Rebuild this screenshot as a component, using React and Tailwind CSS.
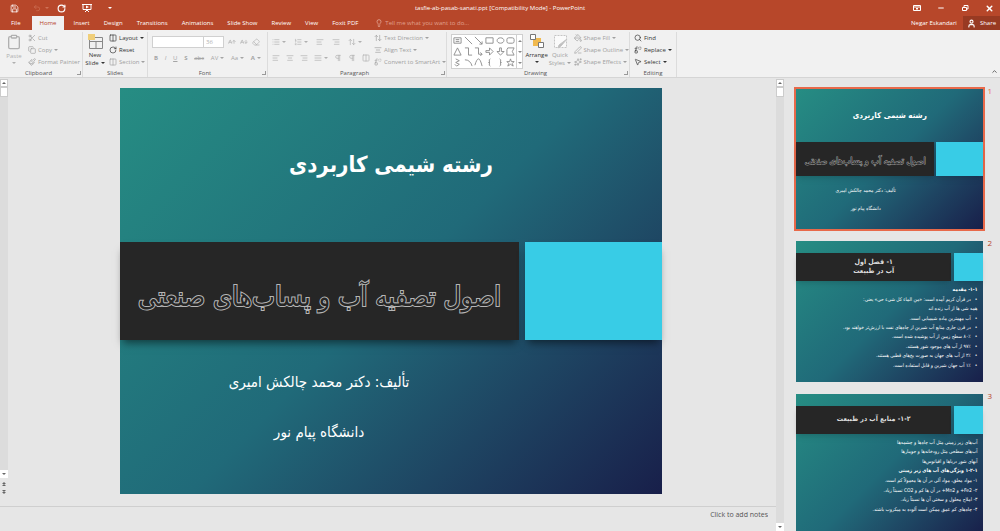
import React from "react";
import {
  AArrowDown,
  AArrowUp,
  AlignCenter,
  AlignJustify,
  AlignLeft,
  AlignRight,
  ArrowUpDown,
  ChevronUp,
  Clipboard,
  Columns2,
  Copy,
  Eraser,
  Lightbulb,
  List,
  ListOrdered,
  Minus,
  MousePointer2,
  PaintBucket,
  Paintbrush,
  PenLine,
  Pilcrow,
  Replace,
  RotateCw,
  Save,
  Scissors,
  Search,
  Sparkles,
  Undo2,
  User,
  X,
} from "lucide-react";

const TABS = ["File", "Home", "Insert", "Design", "Transitions", "Animations", "Slide Show", "Review", "View", "Foxit PDF"];

const SHAPES = [
  "M1 2h8v6H1zM3 4h4M3 6h4",
  "M1 1l8 8",
  "M1 1l8 8M9 6v3H6",
  "M1 2h8v6H1z",
  "M5 2c5 0 5 6 0 6s-5-6 0-6z",
  "M3 2h4q2 0 2 2v2q0 2-2 2H3q-2 0-2-2V4q0-2 2-2z",
  "M5 1l4 8H1z",
  "M1 1h4v8h4",
  "M1 1h4v7h4M7 6l2 2-2 2",
  "M1 4h4V1l4 4-4 4V6H1z",
  "M4 1h2v4h3L5 9 1 5h3z",
  "M2 1h7L7 5l2 4H1V3z",
  "M3 1l4 2-4 2 4 2-3 2M2 7l2 2",
  "M1 2q6 0 8 7",
  "M1 8q2-7 4-7t4 8",
  "M6 1q-2 0-1 4q-2 0 0 0q-1 4 1 4",
  "M4 1q2 0 1 4q2 0 0 0q1 4-1 4",
  "M5 1l1 3h3L7 6l1 3-3-2-3 2 1-3-2-2h3z",
];

const CHAPTER_ONE = [
  { text: "۱-۱- مقدمه", bold: true },
  { text: "در قرآن کریم آمده است: «من الماء کل شیء حی» یعنی:", bullet: true },
  { text: "همه شی ها از آب زنده اند" },
  { text: "آب مهمترین ماده شیمیایی است.", bullet: true },
  { text: "در قرن جاری منابع آب شیرین از چاه‌های نفت با ارزش‌تر خواهند بود.", bullet: true },
  { text: "۸۰٪ سطح زمین از آب پوشیده شده است.", bullet: true },
  { text: "۹۷٪ از آب های موجود شور هستند.", bullet: true },
  { text: "۲٪ از آب های جهان به صورت یخ‌های قطبی هستند.", bullet: true },
  { text: "۱٪ آب جهان شیرین و قابل استفاده است.", bullet: true },
];

const WATER_SOURCES = [
  { text: "آب‌های زیر زمینی مثل آب چاه‌ها و چشمه‌ها" },
  { text: "آب‌های سطحی مثل رودخانه‌ها و جویبارها" },
  { text: "آبهای شور دریاها و اقیانوس‌ها" },
  { text: "۱-۲-۱ ویژگی‌های آب های زیر زمینی", bold: true },
  { text: "۱- مواد معلق، مواد آلی در آن ها معمولاً کم است." },
  { text: "۲- Fe2+ و Mn2+ در آن ها کم و CO2 نسبتاً زیاد." },
  { text: "۳- املاح محلول و سختی آن ها نسبتاً زیاد." },
  { text: "۴- چاه‌های کم عمق ممکن است آلوده به میکروب باشند." },
];

const slideBase =
  "grid bg-linear-135 from-[#268d83] via-[#206a79] via-50% to-[#181f4a] font-['DejaVu_Sans_Condensed','DejaVu_Sans',sans-serif] text-white";

function Caret() {
  return <span className="inline-block h-0 w-0 border-x-2 border-t-2 border-x-transparent border-t-current align-middle" />;
}

function CaretUp() {
  return <span className="inline-block h-0 w-0 border-x-2 border-b-2 border-x-transparent border-b-current align-middle" />;
}

function Tool({ icon: Icon, label, caret, dim }) {
  return (
    <button className={`flex h-3 items-center gap-0.5 whitespace-nowrap ${dim ? "text-[#a0a0a0]" : "text-[#333]"}`}>
      <Icon size={8} strokeWidth={2} />
      {label}
      {caret && <Caret />}
    </button>
  );
}

function IconTool({ icon: Icon, label, caret }) {
  return (
    <button aria-label={label} className="flex items-center gap-0.5 text-[#b0b0b0]">
      <Icon size={8} strokeWidth={2} />
      {caret && <Caret />}
    </button>
  );
}

function Group({ label, className, launcher = true, children }) {
  return (
    <section className={`flex shrink-0 flex-col border-r border-[#dcdcdc] ${className}`}>
      <div className="flex h-[37px] items-start">{children}</div>
      <div className="flex items-center text-[#555]">
        <span className="flex-1 text-center">{label}</span>
        {launcher && (
          <button aria-label={`${label} options`} className="mr-px size-1 border-r border-b border-[#999]" />
        )}
      </div>
    </section>
  );
}

function TitleBar() {
  return (
    <div className="flex h-4 items-center text-white">
      <div className="flex w-1/4 items-center pl-2.5">
        <button aria-label="Save" className="mr-3.5"><Save size={9} /></button>
        <button aria-label="Undo" className="mr-2 flex items-center gap-1 text-[#cf7257]"><Undo2 size={8} /><Caret /></button>
        <button aria-label="Repeat" className="mr-4"><RotateCw size={9} strokeWidth={3} /></button>
        <button aria-label="Start from beginning" className="mr-4">
          <svg width="10" height="10" viewBox="0 0 10 10" fill="none" stroke="currentColor">
            <path d="M0 1.5h10M1 1.5v5h8v-5M5 6.5v1M3 9l2-2 2 2" />
            <path d="M4 2.5l3 1.5-3 1.5z" fill="currentColor" stroke="none" />
          </svg>
        </button>
        <button aria-label="Customize toolbar" className="flex items-center"><Caret /></button>
      </div>
      <h1 className="flex-1 text-center">tasfie-ab-pasab-sanati.ppt [Compatibility Mode] - PowerPoint</h1>
      <div className="flex w-1/4 items-center justify-end gap-4 pr-1.5">
        <button aria-label="Ribbon display options">
          <svg width="8" height="8" viewBox="0 0 8 8" fill="none" stroke="currentColor">
            <path d="M.5 1.5h7v5h-7zM.5 3h7M4 6V4M3 5l1-1 1 1" />
          </svg>
        </button>
        <button aria-label="Minimize"><Minus size={8} strokeWidth={3} /></button>
        <button aria-label="Restore">
          <svg width="8" height="8" viewBox="0 0 8 8" fill="none" stroke="currentColor">
            <path d="M1.5 3.5h4v3h-4zM3 3V1.5h4V5H6" />
          </svg>
        </button>
        <button aria-label="Close"><X size={9} strokeWidth={4} /></button>
      </div>
    </div>
  );
}

function TabBar() {
  return (
    <div className="flex h-3.5 items-stretch text-white">
      <nav className="flex items-stretch pl-1">
        {TABS.map((tab) => (
          <button
            key={tab}
            className={tab === "Home" ? "mr-0.5 ml-1 bg-[#f1f1f1] px-2 text-[#b7472a]" : "px-[7px]"}
          >
            {tab}
          </button>
        ))}
      </nav>
      <label className="ml-2.5 flex flex-1 items-center gap-0.5 text-[#eebcad]">
        <Lightbulb size={8} />
        <input
          aria-label="Tell me what you want to do"
          placeholder="Tell me what you want to do..."
          className="w-32 bg-transparent placeholder:text-[#e0a08e]"
        />
      </label>
      <span className="flex items-center pr-1.5">Negar Eskandari</span>
      <button className="flex items-center gap-1 bg-[#983a22] px-1">
        <User size={9} strokeWidth={3} />
        Share
      </button>
    </div>
  );
}

function Ribbon() {
  return (
    <div className="flex h-12 items-stretch border-b border-[#d5d5d5] bg-[#f1f1f1] pt-0.5 text-[#555]">
      <Group label="Clipboard" className="w-[83px]">
        <button className="flex w-7 flex-col items-center gap-0.5 pt-0.5 text-[#b0b0b0]">
          <Clipboard size={16} strokeWidth={2} />
          Paste
          <Caret />
        </button>
        <div>
          <Tool icon={Scissors} label="Cut" dim />
          <Tool icon={Copy} label="Copy" caret dim />
          <Tool icon={Paintbrush} label="Format Painter" dim />
        </div>
      </Group>

      <Group label="Slides" className="w-[65px]" launcher={false}>
        <button className="flex w-6 flex-col items-center pt-0.5 leading-2 text-[#333]">
          <svg className="mb-0.5" width="15" height="15" viewBox="0 0 15 15" fill="none" stroke="#888">
            <path d="M1.5 3.5h13v11h-13zM1.5 7.5h13M8 7.5v7" />
            <path d="M0 0h7v6H0z" fill="#f0cf7a" stroke="none" />
          </svg>
          New
          <span className="flex items-center gap-0.5">Slide <Caret /></span>
        </button>
        <div className="pl-0.5">
          <Tool icon={Columns2} label="Layout" caret />
          <Tool icon={RotateCw} label="Reset" />
          <Tool icon={Columns2} label="Section" caret dim />
        </div>
      </Group>

      <Group label="Font" className="w-[120px]">
        <div className="flex flex-1 flex-col gap-1.5 px-1 pt-1">
          <div className="flex items-center gap-1">
            <div className="flex">
              <select aria-label="Font name" className="h-3 w-[52px] appearance-none border border-[#d0d0d0] bg-white" />
              <select aria-label="Font size" className="h-3 w-5 appearance-none border border-l-0 border-[#d0d0d0] bg-white px-0.5 text-[#b0b0b0]">
                <option>36</option>
              </select>
            </div>
            <IconTool icon={AArrowUp} label="Increase font size" />
            <IconTool icon={AArrowDown} label="Decrease font size" />
            <IconTool icon={Eraser} label="Clear formatting" />
          </div>
          <div className="flex items-center justify-between px-0.5 text-[#a5a5a5]">
            <button className="font-bold">B</button>
            <button className="italic">I</button>
            <button className="underline">U</button>
            <button className="font-bold">S</button>
            <button className="line-through">abc</button>
            <button className="flex items-center gap-0.5">AV <Caret /></button>
            <button className="flex items-center gap-0.5">Aa <Caret /></button>
            <button className="flex items-center gap-0.5 font-bold">A <Caret /></button>
          </div>
        </div>
      </Group>

      <Group label="Paragraph" className="w-[179px]">
        <div className="flex flex-1 flex-col gap-2 px-1 pt-1.5">
          <div className="flex items-center gap-2">
            <IconTool icon={List} label="Bullets" caret />
            <IconTool icon={ListOrdered} label="Numbering" caret />
            <IconTool icon={AlignLeft} label="Decrease indent" />
            <IconTool icon={AlignRight} label="Increase indent" />
            <IconTool icon={ArrowUpDown} label="Line spacing" caret />
          </div>
          <div className="flex items-center gap-1.5">
            <IconTool icon={AlignLeft} label="Align left" />
            <IconTool icon={AlignCenter} label="Center" />
            <IconTool icon={AlignRight} label="Align right" />
            <IconTool icon={AlignJustify} label="Justify" caret />
            <IconTool icon={Pilcrow} label="Left to right" />
            <IconTool icon={Pilcrow} label="Right to left" />
            <IconTool icon={Columns2} label="Columns" />
          </div>
        </div>
        <div className="w-[78px]">
          <Tool icon={ArrowUpDown} label="Text Direction" caret dim />
          <Tool icon={AlignCenter} label="Align Text" caret dim />
          <Tool icon={Replace} label="Convert to SmartArt" caret dim />
        </div>
      </Group>

      <Group label="Drawing" className="w-[183px]">
        <div className="mt-0.5 ml-1 flex border border-[#cfcfcf] bg-white">
          <div className="grid grid-cols-6 gap-0.5 p-px">
            {SHAPES.map((d, i) => (
              <button key={i} aria-label={`Shape ${i + 1}`}>
                <svg width="9" height="9" viewBox="0 0 10 10" fill="none" stroke="#8a8a8a">
                  <path d={d} />
                </svg>
              </button>
            ))}
          </div>
          <div className="flex w-1.5 flex-col items-center justify-around border-l border-[#cfcfcf] text-[#888]">
            <CaretUp />
            <Caret />
            <Caret />
          </div>
        </div>
        <button className="ml-0.5 flex w-6 flex-col items-center gap-0.5 pt-0.5 text-[#333]">
          <svg width="16" height="15" viewBox="0 0 16 15">
            <path d="M4 4h8v8H4z" fill="#f0b94f" />
            <path d="M1.5 .5h5v5h-5zM9.5 8.5h5v5h-5z" fill="#fff" stroke="#777" />
          </svg>
          Arrange
          <Caret />
        </button>
        <button className="flex w-6 flex-col items-center pt-0.5 leading-2 text-[#a0a0a0]">
          <svg className="mb-px" width="16" height="16" viewBox="0 0 16 16" fill="none" stroke="#c4c4c4">
            <path d="M2.5 1.5h12v12h-12z" fill="#fafafa" strokeDasharray="2 1" />
            <path d="M15 5l-6 7-3 2 1-3z" fill="#bdbdbd" />
          </svg>
          Quick
          <span className="flex items-center gap-0.5">Styles <Caret /></span>
        </button>
        <div className="ml-0.5">
          <Tool icon={PaintBucket} label="Shape Fill" caret dim />
          <Tool icon={PenLine} label="Shape Outline" caret dim />
          <Tool icon={Sparkles} label="Shape Effects" caret dim />
        </div>
      </Group>

      <Group label="Editing" className="w-[47px]" launcher={false}>
        <div className="pl-1">
          <Tool icon={Search} label="Find" />
          <Tool icon={Replace} label="Replace" caret />
          <Tool icon={MousePointer2} label="Select" caret />
        </div>
      </Group>

      <div className="flex flex-1 items-end justify-end p-0.5">
        <button aria-label="Collapse the ribbon"><ChevronUp size={7} strokeWidth={3} /></button>
      </div>
    </div>
  );
}

function ScrollBar({ paging }) {
  return (
    <div className="flex w-2 shrink-0 flex-col items-center bg-[#dcdcdc] text-[#666]">
      <button aria-label="Scroll up" className="flex h-2 w-full items-center justify-center border border-[#ccc] bg-white">
        <CaretUp />
      </button>
      <div className="h-2.5 w-full border border-[#ccc] bg-white" />
      <div className="flex-1" />
      <button aria-label="Scroll down" className="flex h-2 w-full items-center justify-center bg-white">
        <Caret />
      </button>
      {paging && (
        <div className="flex w-full flex-col items-center gap-1 bg-[#e6e6e6] py-1">
          <button aria-label="Previous slide" className="flex flex-col items-center"><CaretUp /><CaretUp /></button>
          <button aria-label="Next slide" className="flex flex-col items-center"><Caret /><Caret /></button>
        </div>
      )}
    </div>
  );
}

function MainSlide() {
  return (
    <article dir="rtl" className={`aspect-[542/406] w-full grid-cols-1 grid-rows-[154fr_98fr_154fr] ${slideBase}`}>
      <h2 className="flex items-center justify-center text-[22px] font-bold">رشته شیمی کاربردی</h2>
      <div dir="ltr" className="flex gap-1.5">
        <div className="flex min-w-0 flex-[399] items-center justify-center bg-[#262626] shadow-[0_6px_8px_-3px_rgba(0,0,0,0.5)]">
          <p dir="rtl" className="pt-3 text-[27px] whitespace-nowrap text-[#262626] [-webkit-text-stroke:2px_#b5b5b5] [paint-order:stroke_fill]">
            اصول تصفیه آب و پساب‌های صنعتی
          </p>
        </div>
        <div className="min-w-0 flex-[137] bg-[#38cce6] shadow-[0_6px_8px_-3px_rgba(0,0,0,0.5)]" />
      </div>
      <div className="flex flex-col items-center gap-[42px] pt-[38px] pr-36 text-[15px]">
        <p>تألیف: دکتر محمد چالکش امیری</p>
        <p>دانشگاه پیام نور</p>
      </div>
    </article>
  );
}

function TitleThumb() {
  return (
    <div dir="rtl" className={`aspect-[187/140] grid-cols-1 grid-rows-[53fr_34fr_53fr] ${slideBase}`}>
      <p className="flex items-center justify-center text-[8px] font-bold">رشته شیمی کاربردی</p>
      <div dir="ltr" className="flex gap-0.5">
        <div className="flex min-w-0 flex-[138] items-center justify-center bg-[#262626] shadow-md">
          <p dir="rtl" className="pt-1 text-[9px] whitespace-nowrap text-[#262626] [-webkit-text-stroke:1px_#999] [paint-order:stroke_fill]">
            اصول تصفیه آب و پساب‌های صنعتی
          </p>
        </div>
        <div className="min-w-0 flex-[47] bg-[#38cce6] shadow-md" />
      </div>
      <div className="flex flex-col items-center gap-2.5 pt-2.5 pr-12 text-[5px]">
        <p>تألیف: دکتر محمد چالکش امیری</p>
        <p>دانشگاه پیام نور</p>
      </div>
    </div>
  );
}

function ContentThumb({ title, lines, className }) {
  return (
    <div dir="rtl" className={`aspect-[187/140] grid-cols-1 grid-rows-[12fr_28fr_100fr] ${slideBase}`}>
      <div />
      <div dir="ltr" className="flex gap-[3px]">
        <div dir="rtl" className="flex min-w-0 flex-[155] flex-col items-center justify-center bg-[#262626] text-[7px] leading-[9px] font-bold text-[#ddd] shadow-md">
          {title.map((row) => (
            <p key={row}>{row}</p>
          ))}
        </div>
        <div className="min-w-0 flex-[29] bg-[#38cce6] shadow-md" />
      </div>
      <ul className={`flex flex-col justify-between px-1.5 pt-1 text-[5px] leading-[9px] whitespace-nowrap ${className}`}>
        {lines.map((line) => (
          <li key={line.text} className={`flex gap-1 ${line.bold ? "font-bold" : ""}`}>
            {line.bullet && <span>•</span>}
            <span>{line.text}</span>
          </li>
        ))}
      </ul>
    </div>
  );
}

function Thumbnail({ number, selected, children }) {
  return (
    <li className="flex items-start gap-0.5">
      <button
        aria-label={`Slide ${number}`}
        className={`block min-w-0 flex-1 border-2 ${selected ? "border-[#e8694a]" : "border-transparent"}`}
      >
        {children}
      </button>
      <span className={`text-[8px] leading-2 ${selected ? "text-[#e8694a]" : "text-[#b7472a]"}`}>{number}</span>
    </li>
  );
}

export default function App() {
  return (
    <div className="flex h-screen flex-col overflow-hidden bg-[#e6e6e6] font-['Open_Sans',sans-serif] text-[6px] leading-2">
      <header className="bg-[#b7472a]">
        <TitleBar />
        <TabBar />
      </header>
      <Ribbon />

      <div className="flex min-h-0 flex-1 pt-px">
        <div className="flex min-w-0 flex-1 flex-col">
          <div className="flex min-h-0 flex-1">
            <ScrollBar paging />
            <main className="min-w-0 flex-1 pt-[9px] pr-[114px] pl-28">
              <MainSlide />
            </main>
          </div>
          <div className="mt-2 border-t border-[#cfcfcf] pr-2">
            <textarea
              aria-label="Notes"
              rows={1}
              placeholder="Click to add notes"
              className="block h-6 w-full resize-none bg-transparent pt-1 text-right text-[7px] placeholder:text-[#555]"
            />
          </div>
        </div>
        <ScrollBar />
        <aside className="w-[216px] shrink-0 overflow-hidden pt-2 pr-2 pl-2.5">
          <ol className="flex flex-col gap-2">
            <Thumbnail number={1} selected>
              <TitleThumb />
            </Thumbnail>
            <Thumbnail number={2}>
              <ContentThumb title={["۱- فصل اول", "آب در طبیعت"]} lines={CHAPTER_ONE} className="pb-3" />
            </Thumbnail>
            <Thumbnail number={3}>
              <ContentThumb title={["۱-۲- منابع آب در طبیعت"]} lines={WATER_SOURCES} className="pb-5" />
            </Thumbnail>
          </ol>
        </aside>
      </div>
    </div>
  );
}
